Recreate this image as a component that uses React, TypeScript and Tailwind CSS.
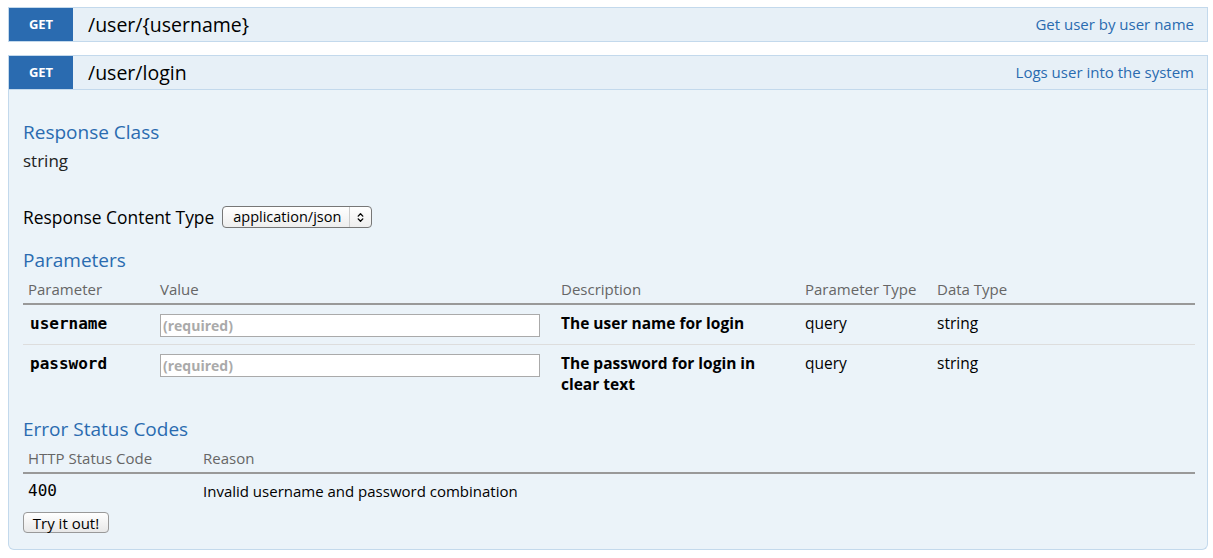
import { ChevronsUpDown } from "lucide-react";

const sans = { fontFamily: '"Open Sans", "DejaVu Sans", sans-serif' };
const mono = { fontFamily: '"DejaVu Sans Mono", monospace' };

const OpHeader = ({ path, summary }: any) => {
    return (
        <div className="flex h-[35px] items-stretch border border-[#c3d9ec] bg-[#e7f0f7]">
            <div className="flex w-[64px] items-center justify-center bg-[#2a6bb0] text-[13px] font-bold text-white">GET</div>
            <div className="flex flex-1 items-center pl-[15px] text-[19.5px] text-black">{path}</div>
            <div className="flex items-center pr-[13px] text-[15px] text-[#2a6bb0]">{summary}</div>
        </div>
    );
};

export default function App() {
    const params = [
        { name: "username", desc: "The user name for login" },
        { name: "password", desc: "The password for login in clear text" },
    ];

    return (
        <div className="min-h-[558px] bg-white pl-[8px] pr-[5px] pt-[7px]" style={sans}>
            <OpHeader path="/user/{username}" summary="Get user by user name" />

            <div className="mt-[13px]">
                <OpHeader path="/user/login" summary="Logs user into the system" />
                <div className="rounded-b-[6px] border border-t-0 border-[#c3d9ec] bg-[#ebf3f9] pb-[16px] pl-[14px] pr-[12px] pt-[29px]">
                    <h4 className="text-[19px] leading-[26px] text-[#2a6bb0]">Response Class</h4>
                    <div className="mt-[5px] text-[17px] leading-[22px] text-[#222]">string</div>

                    <div className="mt-[34px] flex h-[22px] items-center gap-[8px] text-[17.4px] text-black">
                        <span>Response Content Type</span>
                        <div className="flex h-[22px] w-[150px] items-center rounded-[4px] border border-[#777] bg-gradient-to-b from-white to-[#eee] text-[14.5px]">
                            <span className="flex-1 pl-[10px]">application/json</span>
                            <span className="flex h-full w-[22px] items-center justify-center border-l border-[#ccc]">
                                <ChevronsUpDown size={11} strokeWidth={3} />
                            </span>
                        </div>
                    </div>

                    <h4 className="mt-[19px] text-[19px] leading-[26px] text-[#2a6bb0]">Parameters</h4>
                    <table className="mt-[6px] w-full border-collapse text-left">
                        <thead>
                            <tr className="border-b-2 border-[#999] text-[15px] leading-[20px] text-[#666]">
                                <th className="w-[132px] px-[5px] pb-[4px] font-normal">Parameter</th>
                                <th className="w-[401px] px-[5px] pb-[4px] font-normal">Value</th>
                                <th className="w-[244px] px-[5px] pb-[4px] font-normal">Description</th>
                                <th className="w-[132px] px-[5px] pb-[4px] font-normal">Parameter Type</th>
                                <th className="px-[5px] pb-[4px] font-normal">Data Type</th>
                            </tr>
                        </thead>
                        <tbody>
                            {params.map((p, i) => (
                                <tr key={p.name} className={`align-top ${i == 0 ? "border-b border-[#ddd]" : ""}`}>
                                    <td className="px-[5px] pb-[7px] pt-[8px] pl-[7px] text-[16px] font-bold leading-[21px]" style={mono}>{p.name}</td>
                                    <td className="px-[5px] pb-[7px] pt-[9px]">
                                        <input
                                            placeholder="(required)"
                                            className="block h-[23px] w-[380px] border border-[#aaa] bg-white px-[2px] text-[14px] placeholder:font-bold placeholder:text-[#aaa]"
                                            style={sans}
                                        />
                                    </td>
                                    <td className="px-[5px] pb-[7px] pt-[8px] pr-[20px] text-[15.5px] font-bold leading-[21px] text-black">{p.desc}</td>
                                    <td className="px-[5px] pb-[7px] pt-[8px] text-[15.5px] leading-[21px]">query</td>
                                    <td className="px-[5px] pb-[7px] pt-[8px] text-[15.5px] leading-[21px]">string</td>
                                </tr>
                            ))}
                        </tbody>
                    </table>

                    <h4 className="mt-[14px] text-[19px] leading-[26px] text-[#2a6bb0]">Error Status Codes</h4>
                    <table className="mt-[6px] w-full border-collapse text-left">
                        <thead>
                            <tr className="border-b-2 border-[#999] text-[15px] leading-[20px] text-[#666]">
                                <th className="w-[175px] px-[5px] pb-[4px] font-normal">HTTP Status Code</th>
                                <th className="px-[5px] pb-[4px] font-normal">Reason</th>
                            </tr>
                        </thead>
                        <tbody>
                            <tr>
                                <td className="px-[5px] pt-[7px] text-[16px] leading-[20px]" style={mono}>400</td>
                                <td className="px-[5px] pt-[7px] text-[15px] leading-[20px]">Invalid username and password combination</td>
                            </tr>
                        </tbody>
                    </table>
                    <button className="mt-[11px] block h-[21px] w-[86px] rounded-[4px] border border-[#999] bg-gradient-to-b from-white to-[#e8e8e8] text-[15px] leading-[18px] text-black">Try it out!</button>
                </div>
            </div>
        </div>
    );
}
